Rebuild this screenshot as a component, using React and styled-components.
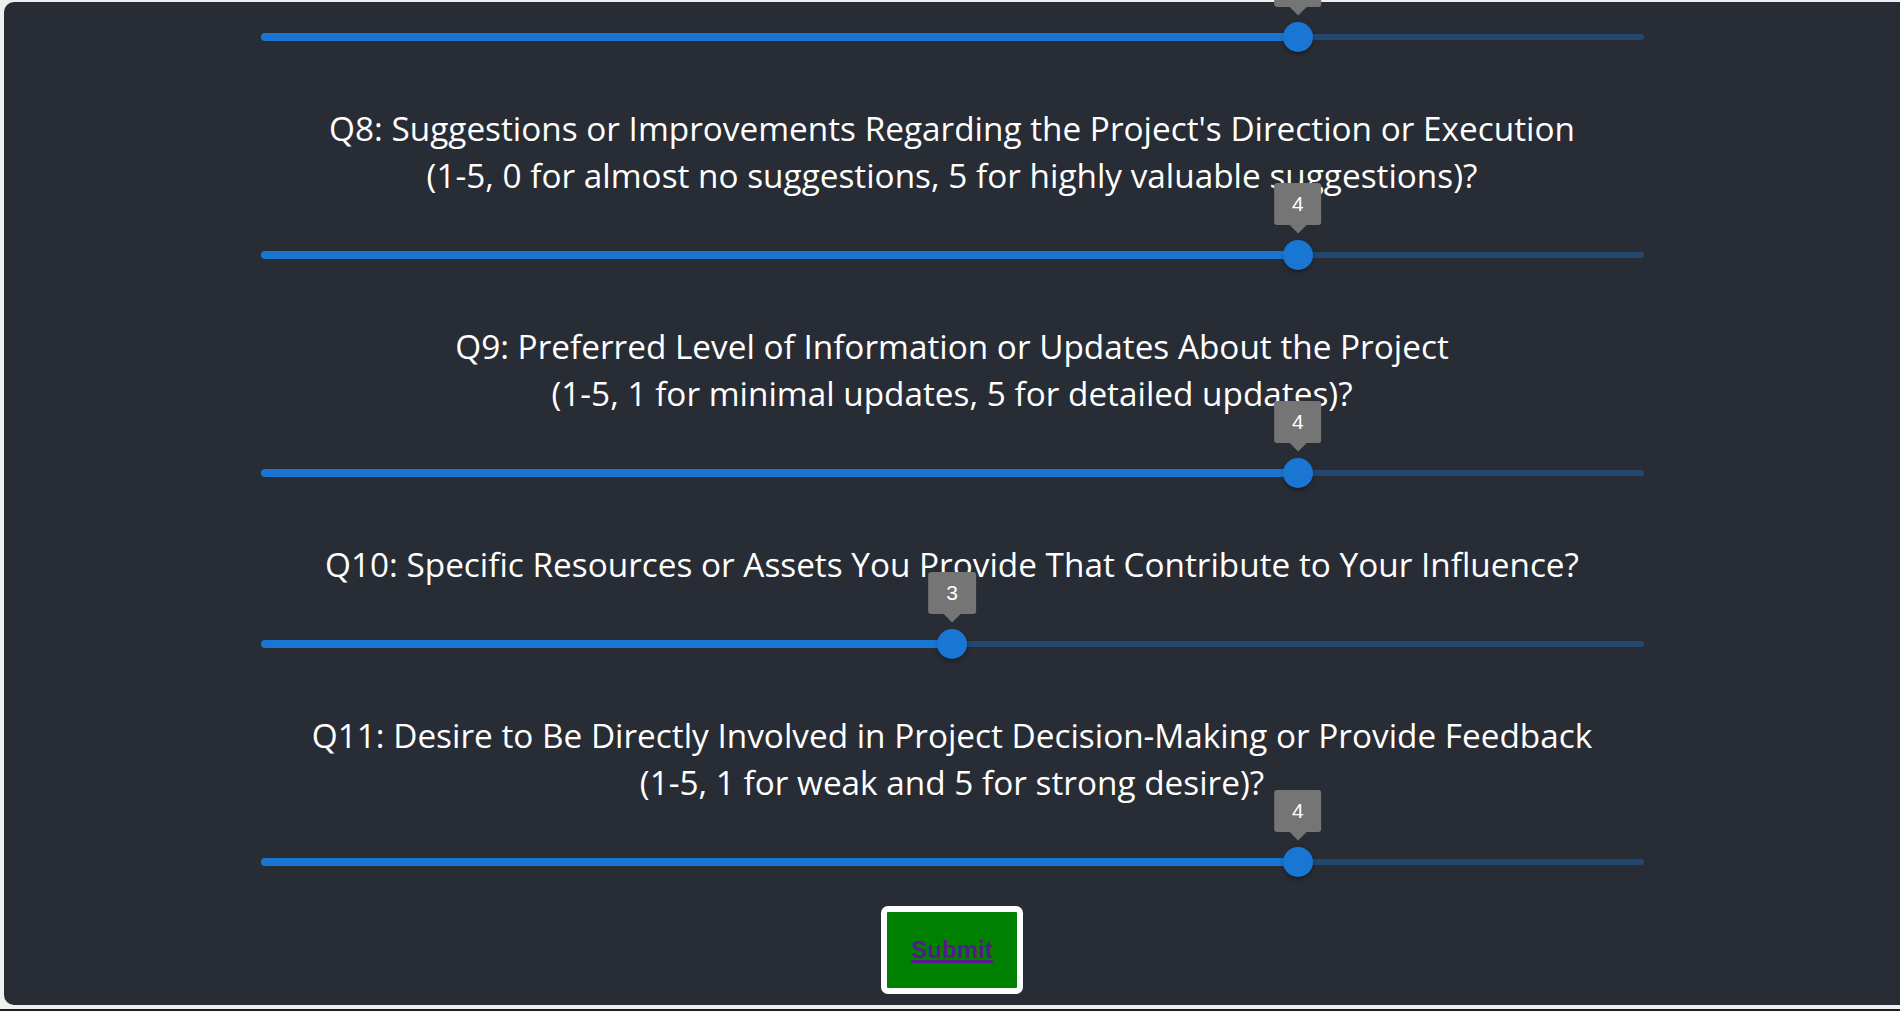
import React from "react";
import styled, { createGlobalStyle } from "styled-components";

const GlobalStyle = createGlobalStyle`
  html, body {
    margin: 0;
    padding: 0;
    background: #efefef;
    overflow: hidden;
  }
  #root {
    height: 1011px;
  }
`;

const Page = styled.div`
  height: 1011px;
  box-sizing: border-box;
  border-bottom: 2px solid #1c1c1c;
  display: flex;
  flex-direction: column;
`;

const Card = styled.main`
  margin: 2px 0 0 4px;
  width: 1920px;
  padding: 13px 24px 0 0;
  height: 1003px;
  box-sizing: border-box;
  flex: none;
  background: #282c34;
  border-radius: 10px;
  display: flex;
  flex-direction: column;
  align-items: center;
  color: #ffffff;
  font-family: "Open Sans", "Noto Sans", sans-serif;
`;

const Column = styled.div`
  width: 1383px;
  display: flex;
  flex-direction: column;
  align-items: stretch;
`;

const Block = styled.section`
  display: flex;
  flex-direction: column;
  align-items: stretch;
`;

const Title = styled.div`
  margin: 46px 0 34px;
  text-align: center;
  font-size: 33.35px;
  line-height: 47px;
  white-space: nowrap;
`;

const SliderRoot = styled.div`
  position: relative;
  height: 44px;
  padding: 19px 0;
  box-sizing: border-box;
`;

const Rail = styled.div`
  height: 6px;
  border-radius: 3px;
  background: #1976d2;
  opacity: 0.38;
`;

const Track = styled.div`
  position: absolute;
  left: 0;
  top: 18px;
  height: 8px;
  border-radius: 4px;
  background: #1976d2;
`;

const Thumb = styled.div`
  position: absolute;
  top: 22px;
  width: 30px;
  height: 30px;
  margin: -15px 0 0 -15px;
  border-radius: 50%;
  background: #1976d2;
  box-shadow: 0 4px 1.5px -3px rgba(0, 0, 0, 0.2),
    0 3px 3px 0 rgba(0, 0, 0, 0.14), 0 1.5px 7px 0 rgba(0, 0, 0, 0.12);
`;

const ValueLabel = styled.div`
  position: absolute;
  left: 50%;
  bottom: 45px;
  transform: translateX(-50%);
  background: #757575;
  color: #ffffff;
  border-radius: 3px;
  padding: 6px 18px;
  font-family: "Liberation Sans", Arial, sans-serif;
  font-size: 21px;
  line-height: 30px;
  white-space: nowrap;

  &::before {
    content: "";
    position: absolute;
    left: 50%;
    bottom: 0;
    width: 12px;
    height: 12px;
    background: inherit;
    transform: translate(-50%, 50%) rotate(45deg);
  }
`;

const ValueText = styled.span`
  position: relative;
`;

const ButtonRow = styled.div`
  display: flex;
  justify-content: center;
  margin-top: 22px;
`;

const SubmitButton = styled.button`
  background: #008000;
  border: 6px solid #ffffff;
  border-radius: 7px;
  padding: 24px;
  cursor: pointer;
  font-family: "Liberation Sans", Arial, sans-serif;
  font-weight: 700;
  font-size: 24px;
  line-height: 28px;
`;

const SubmitLink = styled.a`
  color: #551a8b;
  text-decoration: underline;
  text-decoration-thickness: 3px;
  text-underline-offset: 2px;
`;

function Slider({ value, min = 1, max = 5 }) {
  const pct = ((value - min) / (max - min)) * 100;
  return (
    <SliderRoot>
      <Rail />
      <Track style={{ width: `${pct}%` }} />
      <Thumb style={{ left: `${pct}%` }}>
        <ValueLabel>
          <ValueText>{value}</ValueText>
        </ValueLabel>
      </Thumb>
    </SliderRoot>
  );
}

const questions = [
  {
    id: "q8",
    lines: [
      "Q8: Suggestions or Improvements Regarding the Project's Direction or Execution",
      "(1-5, 0 for almost no suggestions, 5 for highly valuable suggestions)?",
    ],
    value: 4,
  },
  {
    id: "q9",
    lines: [
      "Q9: Preferred Level of Information or Updates About the Project",
      "(1-5, 1 for minimal updates, 5 for detailed updates)?",
    ],
    value: 4,
  },
  {
    id: "q10",
    lines: [
      "Q10: Specific Resources or Assets You Provide That Contribute to Your Influence?",
    ],
    value: 3,
  },
  {
    id: "q11",
    lines: [
      "Q11: Desire to Be Directly Involved in Project Decision-Making or Provide Feedback",
      "(1-5, 1 for weak and 5 for strong desire)?",
    ],
    value: 4,
  },
];

export default function App() {
  return (
    <>
      <GlobalStyle />
      <Page>
        <Card>
          <Column>
            <Slider value={4} />
            {questions.map((q) => (
              <Block key={q.id}>
                <Title>
                  {q.lines.map((l, i) => (
                    <React.Fragment key={i}>
                      {i > 0 && <br />}
                      {l}
                    </React.Fragment>
                  ))}
                </Title>
                <Slider value={q.value} />
              </Block>
            ))}
          </Column>
          <ButtonRow>
            <SubmitButton type="button">
              <SubmitLink href="#">Submit</SubmitLink>
            </SubmitButton>
          </ButtonRow>
        </Card>
      </Page>
    </>
  );
}
